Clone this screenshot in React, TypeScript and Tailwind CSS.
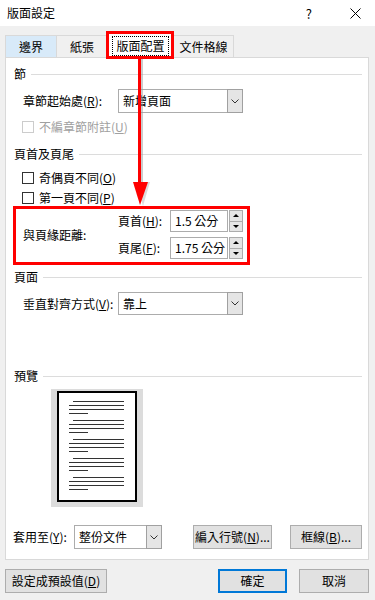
import React from "react";

function SectionHeader({ label }: { label: string }) {
  return (
    <div className="ml-[8px] mr-[6px] flex h-[16px] items-center gap-[5px]">
      <span className="leading-none">{label}</span>
      <div className="h-px flex-1 bg-[#dcdcdc]" />
    </div>
  );
}

function Chevron() {
  return (
    <svg width="8" height="5" viewBox="0 0 8 5">
      <path d="M0.5 0.5 L4 4 L7.5 0.5" fill="none" stroke="#333" strokeWidth="1" />
    </svg>
  );
}

function Combo({ value, width }: { value: string; width: string }) {
  return (
    <div className={`flex h-full border border-[#acacac] bg-white ${width}`}>
      <span className="flex flex-1 items-center pl-[4px] leading-none">{value}</span>
      <div className="flex w-[16px] items-center justify-center border border-[#a0a0a0] bg-[#e5e5e5] -my-px -mr-px">
        <Chevron />
      </div>
    </div>
  );
}

function Spin({ value }: { value: string }) {
  return (
    <div className="flex h-[22px]">
      <div className="flex w-[58px] items-center border border-[#acacac] bg-white pl-[4px] leading-none">
        {value}
      </div>
      <div className="ml-px flex w-[14px] flex-col border border-[#acacac] bg-[#e5e5e5]">
        <div className="flex flex-1 items-center justify-center border-b border-[#acacac]">
          <svg width="6" height="3" viewBox="0 0 6 3">
            <path d="M0 3 L3 0 L6 3 Z" fill="#000" />
          </svg>
        </div>
        <div className="flex flex-1 items-center justify-center">
          <svg width="6" height="3" viewBox="0 0 6 3">
            <path d="M0 0 L3 3 L6 0 Z" fill="#000" />
          </svg>
        </div>
      </div>
    </div>
  );
}

function Check({ label, disabled }: { label: React.ReactNode; disabled?: boolean }) {
  return (
    <div className="ml-[16px] flex h-[14px] items-center gap-[5px]">
      <div
        className={`h-[12px] w-[12px] border bg-white ${disabled ? "border-[#cccccc]" : "border-[#333333]"}`}
      />
      <span className={`leading-none ${disabled ? "text-[#a0a0a0]" : ""}`}>{label}</span>
    </div>
  );
}

function Btn({ children, width, primary }: { children: React.ReactNode; width: string; primary?: boolean }) {
  return (
    <div
      className={`flex h-[24px] items-center justify-center bg-[#e1e1e1] leading-none ${width} ${
        primary ? "border-2 border-[#0078d7]" : "border border-[#adadad]"
      }`}
    >
      {children}
    </div>
  );
}

function PreviewPage() {
  const paras = [0, 1, 2, 3, 4];
  return (
    <div className="ml-[45px] h-[118px] w-[92px] bg-[#dcdcdc] pt-[2px] pl-[6px]">
      <div className="h-[111px] w-[80px] border-2 border-black bg-white pt-[8px] pl-[10px]">
        {paras.map((p) => (
          <div key={p} className="mb-[6px] flex flex-col gap-[3px]">
            <div className="ml-[4px] h-px w-[51px] bg-[#333]" />
            <div className="h-px w-[55px] bg-[#333]" />
            <div className="h-px w-[55px] bg-[#333]" />
            <div className="h-px w-[19px] bg-[#333]" />
          </div>
        ))}
      </div>
    </div>
  );
}

export default function App() {
  return (
    <div className="relative h-[600px] w-[375px] overflow-hidden bg-[#f0f0f0] font-['Noto_Sans_CJK_TC','Noto_Sans',sans-serif] text-[12px] text-black">
      {/* title bar */}
      <div className="flex h-[26px] items-center bg-white pl-[7px]">
        <span className="flex-1 leading-none">版面設定</span>
        <span className="mr-[38px] text-[13px] leading-none">?</span>
        <svg width="11" height="11" viewBox="0 0 11 11" className="mr-[14px]">
          <path d="M0.5 0.5 L10.5 10.5 M10.5 0.5 L0.5 10.5" stroke="#000" strokeWidth="1" />
        </svg>
      </div>

      {/* tabs */}
      <div className="flex h-[31px] items-end pl-[5px]">
        <div className="flex h-[22px] w-[52px] items-center justify-center border border-b-0 border-[#d9d9d9] bg-[#d8eaf9] leading-none">
          邊界
        </div>
        <div className="flex h-[22px] w-[51px] items-center justify-center border border-b-0 border-l-0 border-[#d9d9d9] bg-[#f0f0f0] leading-none">
          紙張
        </div>
        <div className="relative z-10 -mb-px flex h-[26px] w-[66px] items-center justify-center border border-b-0 border-l-0 border-[#d9d9d9] bg-white">
          <span className="border border-dotted border-black px-[3px] py-[3px] leading-none">版面配置</span>
        </div>
        <div className="flex h-[22px] w-[60px] items-center justify-center border border-b-0 border-l-0 border-[#d9d9d9] bg-[#f0f0f0] leading-none">
          文件格線
        </div>
      </div>

      {/* panel */}
      <div className="ml-[5px] flex h-[503px] w-[364px] flex-col border border-[#d9d9d9] bg-white">
        <div className="mt-[8px]">
          <SectionHeader label="節" />
        </div>
        <div className="mt-[7px] ml-[17px] flex h-[24px] items-center">
          <span className="w-[95px] leading-none">
            章節起始處(<u>R</u>):
          </span>
          <Combo value="新增頁面" width="w-[125px]" />
        </div>
        <div className="mt-[7px]">
          <Check
            disabled
            label={
              <>
                不編章節附註(<u>U</u>)
              </>
            }
          />
        </div>
        <div className="mt-[12px]">
          <SectionHeader label="頁首及頁尾" />
        </div>
        <div className="mt-[9px]">
          <Check
            label={
              <>
                奇偶頁不同(<u>O</u>)
              </>
            }
          />
        </div>
        <div className="mt-[6px]">
          <Check
            label={
              <>
                第一頁不同(<u>P</u>)
              </>
            }
          />
        </div>
        <div className="mt-[5px] ml-[17px] flex items-center">
          <span className="w-[95px] leading-none">與頁緣距離:</span>
          <div className="flex flex-col gap-[5px]">
            <div className="flex items-center">
              <span className="w-[52px] leading-none">
                頁首(<u>H</u>):
              </span>
              <Spin value="1.5 公分" />
            </div>
            <div className="flex items-center">
              <span className="w-[52px] leading-none">
                頁尾(<u>F</u>):
              </span>
              <Spin value="1.75 公分" />
            </div>
          </div>
        </div>
        <div className="mt-[10px]">
          <SectionHeader label="頁面" />
        </div>
        <div className="mt-[7px] ml-[17px] flex h-[23px] items-center">
          <span className="w-[95px] leading-none">
            垂直對齊方式(<u>V</u>):
          </span>
          <Combo value="靠上" width="w-[125px]" />
        </div>
        <div className="mt-[53px]">
          <SectionHeader label="預覽" />
        </div>
        <div className="mt-[5px]">
          <PreviewPage />
        </div>
        <div className="mt-[18px] ml-[7px] flex h-[24px] items-center">
          <span className="w-[61px] leading-none">
            套用至(<u>Y</u>):
          </span>
          <Combo value="整份文件" width="w-[88px]" />
          <div className="ml-[31px]">
            <Btn width="w-[79px]">
              編入行號(<u>N</u>)...
            </Btn>
          </div>
          <div className="ml-[18px]">
            <Btn width="w-[72px]">
              框線(<u>B</u>)...
            </Btn>
          </div>
        </div>
      </div>

      {/* bottom buttons */}
      <div className="mt-[9px] ml-[5px] flex items-center">
        <Btn width="w-[102px]">
          設定成預設值(<u>D</u>)
        </Btn>
        <div className="ml-[111px]">
          <Btn width="w-[69px]" primary>
            確定
          </Btn>
        </div>
        <div className="ml-[12px]">
          <Btn width="w-[70px]">取消</Btn>
        </div>
      </div>

      {/* red annotations */}
      <div className="pointer-events-none absolute left-[106px] top-[31px] z-20 h-[28px] w-[68px] border-[3px] border-[#ff0000]" />
      <div className="pointer-events-none absolute left-[13px] top-[206px] z-20 h-[59px] w-[237px] border-[3px] border-[#ff0000]" />
      <svg
        className="pointer-events-none absolute left-[130px] top-[59px] z-20"
        width="22"
        height="148"
        viewBox="0 0 22 148"
      >
        <rect x="11" y="0" width="2" height="124" fill="#9a9a9a" opacity="0.5" />
        <path d="M6 123 L20 123 L13 147 Z" fill="#9a9a9a" opacity="0.35" />
        <rect x="8" y="0" width="3" height="124" fill="#ff0000" />
        <path d="M3 123 L18 123 L10 146 Z" fill="#ff0000" />
      </svg>
    </div>
  );
}
